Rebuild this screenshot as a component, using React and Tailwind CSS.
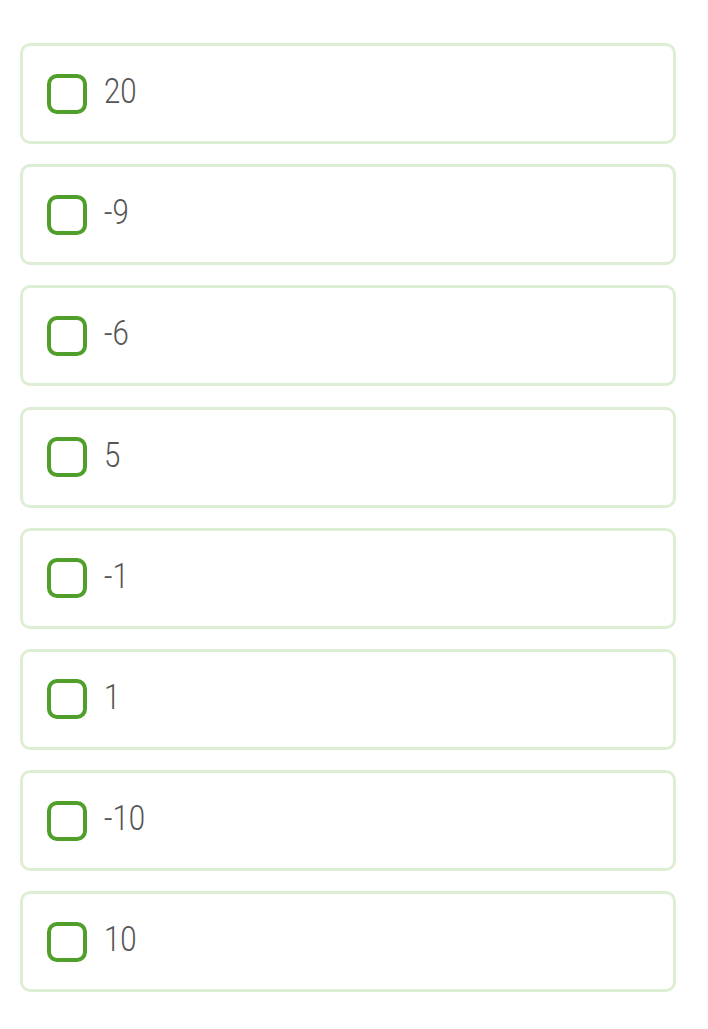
import React from 'react';

const options = ['20', '-9', '-6', '5', '-1', '1', '-10', '10'];

export default function App() {
  return (
    <div className="min-h-screen bg-white pt-[43px] pl-[20px]" style={{ fontFamily: 'Roboto, "Liberation Sans", sans-serif' }}>
      <div className="flex flex-col gap-[20.2px] w-[656px]">
        {options.map((opt, i) => (
          <label key={i} className="flex items-center h-[101px] rounded-[10px] border-[3px] border-[#ddeed5] bg-white pl-[24px]">
            <span className="block w-[40px] h-[40px] rounded-[10px] border-[4px] border-[#4f9f2a] bg-white shrink-0" />
            <span className="ml-[17px] -mt-[4px] text-[35px] font-light text-[#555555] leading-none inline-block scale-x-[0.84] origin-left">{opt}</span>
          </label>
        ))}
      </div>
    </div>
  );
}
